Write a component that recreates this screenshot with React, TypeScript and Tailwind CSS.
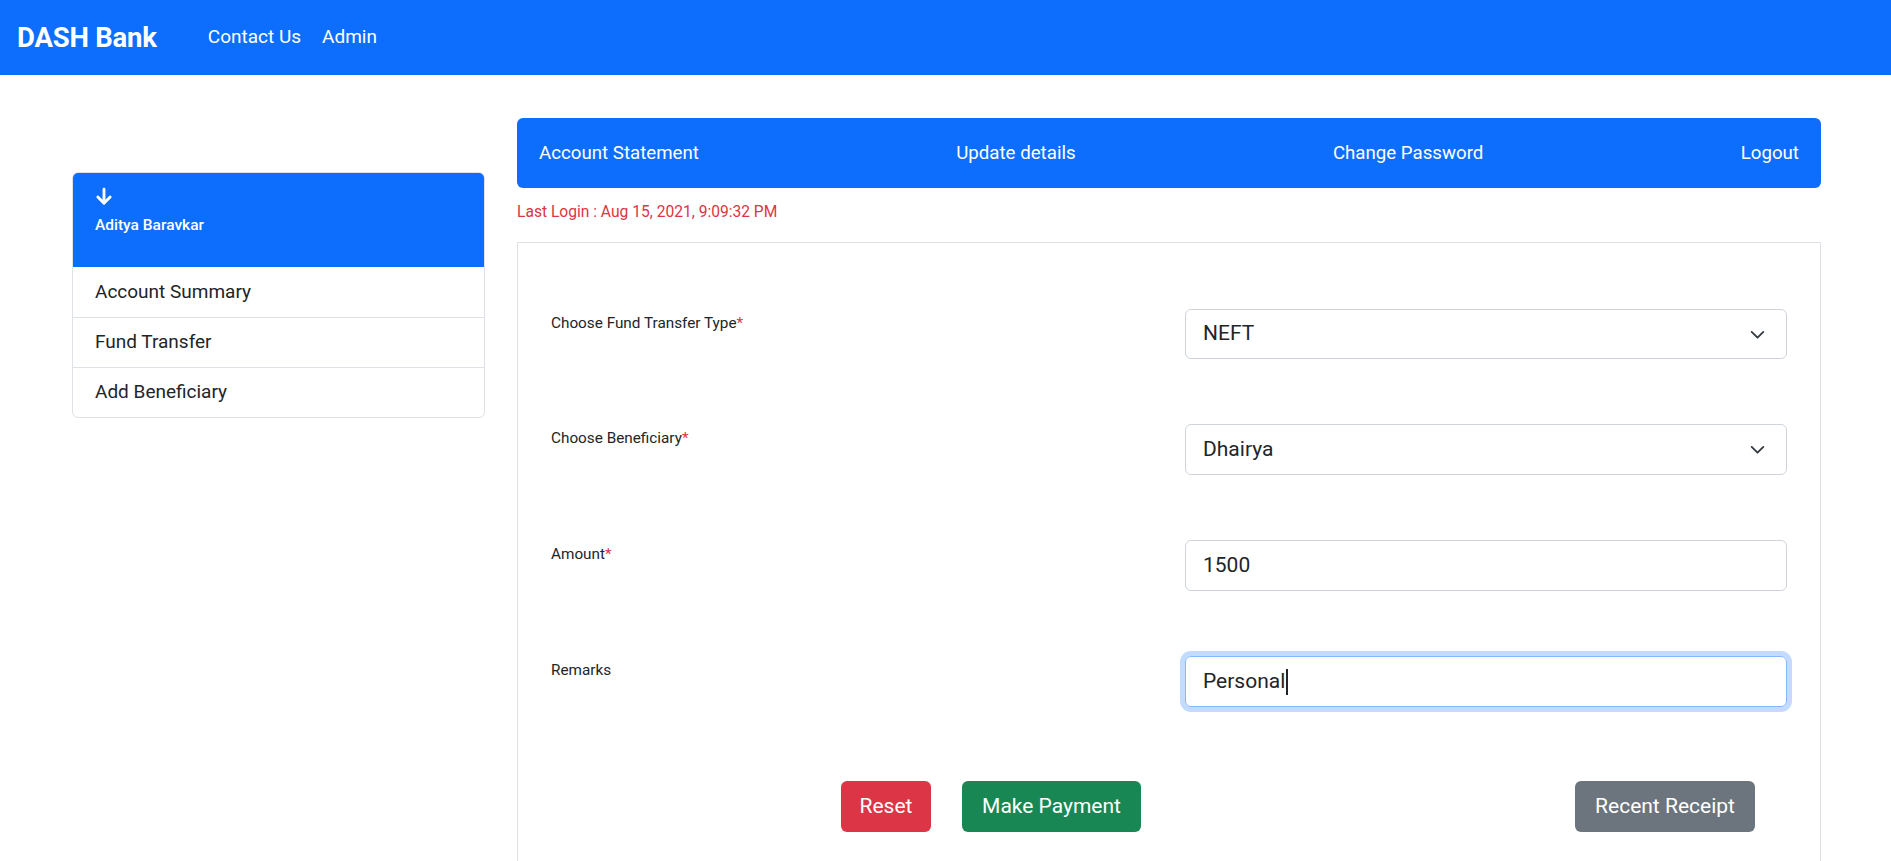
import React from "react";

function Chevron() {
  return (
    <svg width="17" height="13" viewBox="0 0 16 12" className="shrink-0">
      <path d="M2.5 3.5l5.5 5.5 5.5-5.5" fill="none" stroke="#343a40" strokeWidth="1.7" strokeLinecap="round" strokeLinejoin="round" />
    </svg>
  );
}

function ArrowDown() {
  return (
    <svg width="18" height="19" viewBox="0 0 16 17">
      <path d="M8 2v12.5M2.5 9l5.5 5.5 5.5-5.5" fill="none" stroke="#fff" strokeWidth="2.6" strokeLinecap="round" strokeLinejoin="round" />
    </svg>
  );
}

function Row({ label, required, children }: { label: string; required?: boolean; children: React.ReactNode }) {
  return (
    <div className="flex">
      <div className="w-[634px] shrink-0 pt-[3px] text-[15.3px] leading-[22px] text-[#212529]">
        {label}
        {required && <span className="text-[#dc3545]">*</span>}
      </div>
      <div className="flex-1">{children}</div>
    </div>
  );
}

export default function App() {
  return (
    <div className="min-h-screen bg-white text-[#212529]" style={{ fontFamily: "Roboto, 'Liberation Sans', sans-serif" }}>
      <nav className="h-[75px] bg-[#0d6efd] flex items-center pl-[17px] text-white">
        <span className="text-[27.5px] font-bold leading-none tracking-[-0.2px]">DASH Bank</span>
        <div className="flex items-center gap-[21px] ml-[51px] text-[19px]">
          <span>Contact Us</span>
          <span>Admin</span>
        </div>
      </nav>

      <div className="flex pl-[72px] pr-[70px] pt-[43px] gap-[32px]">
        <aside className="w-[413px] shrink-0 mt-[54px]">
          <div className="rounded-[6px] border border-[#dee2e6] overflow-hidden">
            <div className="bg-[#0d6efd] h-[95px] -mx-px -mt-px pl-[23px] pt-[15px] text-white">
              <ArrowDown />
              <div className="mt-[9px] text-[15.5px] font-medium leading-[20px]">Aditya Baravkar</div>
            </div>
            {["Account Summary", "Fund Transfer", "Add Beneficiary"].map((t, i) => (
              <div
                key={t}
                className={`h-[50px] flex items-center pl-[22px] text-[19px] ${i > 0 ? "border-t border-[#dee2e6]" : ""}`}
              >
                {t}
              </div>
            ))}
          </div>
        </aside>

        <main className="flex-1">
          <div className="h-[70px] rounded-[6px] bg-[#0d6efd] flex items-center justify-between px-[22px] text-white text-[18.7px]">
            <span>Account Statement</span>
            <span>Update details</span>
            <span>Change Password</span>
            <span>Logout</span>
          </div>
          <div className="mt-[14px] text-[15.6px] leading-[20px] text-[#dc3545]">
            Last Login : Aug 15, 2021, 9:09:32 PM
          </div>
          <div className="mt-[20px] border border-[#dee2e6] pt-[66px] pl-[33px] pr-[33px] pb-[40px]">
            <div className="flex flex-col gap-[65px]">
              <Row label="Choose Fund Transfer Type" required>
                <div className="h-[50px] rounded-[6px] border border-[#ced4da] flex items-center justify-between pl-[17px] pr-[20px] text-[21px]">
                  <span>NEFT</span>
                  <Chevron />
                </div>
              </Row>
              <Row label="Choose Beneficiary" required>
                <div className="h-[51px] rounded-[6px] border border-[#ced4da] flex items-center justify-between pl-[17px] pr-[20px] text-[21px]">
                  <span>Dhairya</span>
                  <Chevron />
                </div>
              </Row>
              <Row label="Amount" required>
                <div className="h-[51px] rounded-[6px] border border-[#ced4da] flex items-center pl-[17px] text-[21px]">
                  <span>1500</span>
                </div>
              </Row>
              <Row label="Remarks">
                <div className="h-[51px] rounded-[6px] border border-[#86b7fe] shadow-[0_0_0_5px_rgba(13,110,253,0.25)] flex items-center pl-[17px] text-[21px]">
                  <span>Personal</span>
                  <span className="inline-block w-[2px] h-[26px] bg-[#212529] ml-[1px]" />
                </div>
              </Row>
            </div>
            <div className="flex items-center mt-[74px] pl-[290px] pr-[32px]">
              <button className="h-[51px] w-[90px] rounded-[6px] bg-[#dc3545] text-white text-[21px]">Reset</button>
              <button className="h-[51px] w-[179px] ml-[31px] rounded-[6px] bg-[#198754] text-white text-[21px]">Make Payment</button>
              <button className="h-[51px] w-[180px] ml-auto rounded-[6px] bg-[#6c757d] text-white text-[21px]">Recent Receipt</button>
            </div>
          </div>
        </main>
      </div>
    </div>
  );
}
